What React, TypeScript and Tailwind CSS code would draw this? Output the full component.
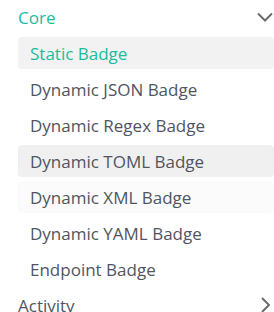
import React from "react";

const items = [
  "Static Badge",
  "Dynamic JSON Badge",
  "Dynamic Regex Badge",
  "Dynamic TOML Badge",
  "Dynamic XML Badge",
  "Dynamic YAML Badge",
  "Endpoint Badge",
];

const Chevron: React.FC<{ dir: "down" | "right" }> = ({ dir }) => (
  <svg width="16" height="16" viewBox="0 0 16 16" fill="none" stroke="#6b6b6b" strokeWidth="2">
    {dir === "down" ? <path d="M1 4.5l7 7 7-7" /> : <path d="M5 1l7 7-7 7" />}
  </svg>
);

export default function App() {
  return (
    <div className="w-[274px] h-[312px] overflow-hidden bg-white font-['Open_Sans',sans-serif] text-[17px] leading-none">
      <div className="flex items-center justify-between h-[34px] pl-[18px] pr-[1px] text-[#1bbc9b]">
        <span>Core</span>
        <Chevron dir="down" />
      </div>
      <div className="flex flex-col gap-1 pl-[18px] pt-[3px]">
        {items.map((item, i) => (
          <div
            key={item}
            className={
              "flex items-center h-[32px] pl-3 rounded " +
              (i === 0
                ? "bg-[#f2f2f2] text-[#1bbc9b]"
                : i === 3
                ? "bg-[#f0f0f0] text-[#50555f]"
                : i === 4
                ? "bg-[#fbfbfb] text-[#50555f]"
                : "text-[#50555f]")
            }
          >
            {item}
          </div>
        ))}
      </div>
      <div className="flex items-center justify-between h-[32px] mt-1 pl-[18px] pr-[1px] text-[#50555f]">
        <span>Activity</span>
        <Chevron dir="right" />
      </div>
    </div>
  );
}
